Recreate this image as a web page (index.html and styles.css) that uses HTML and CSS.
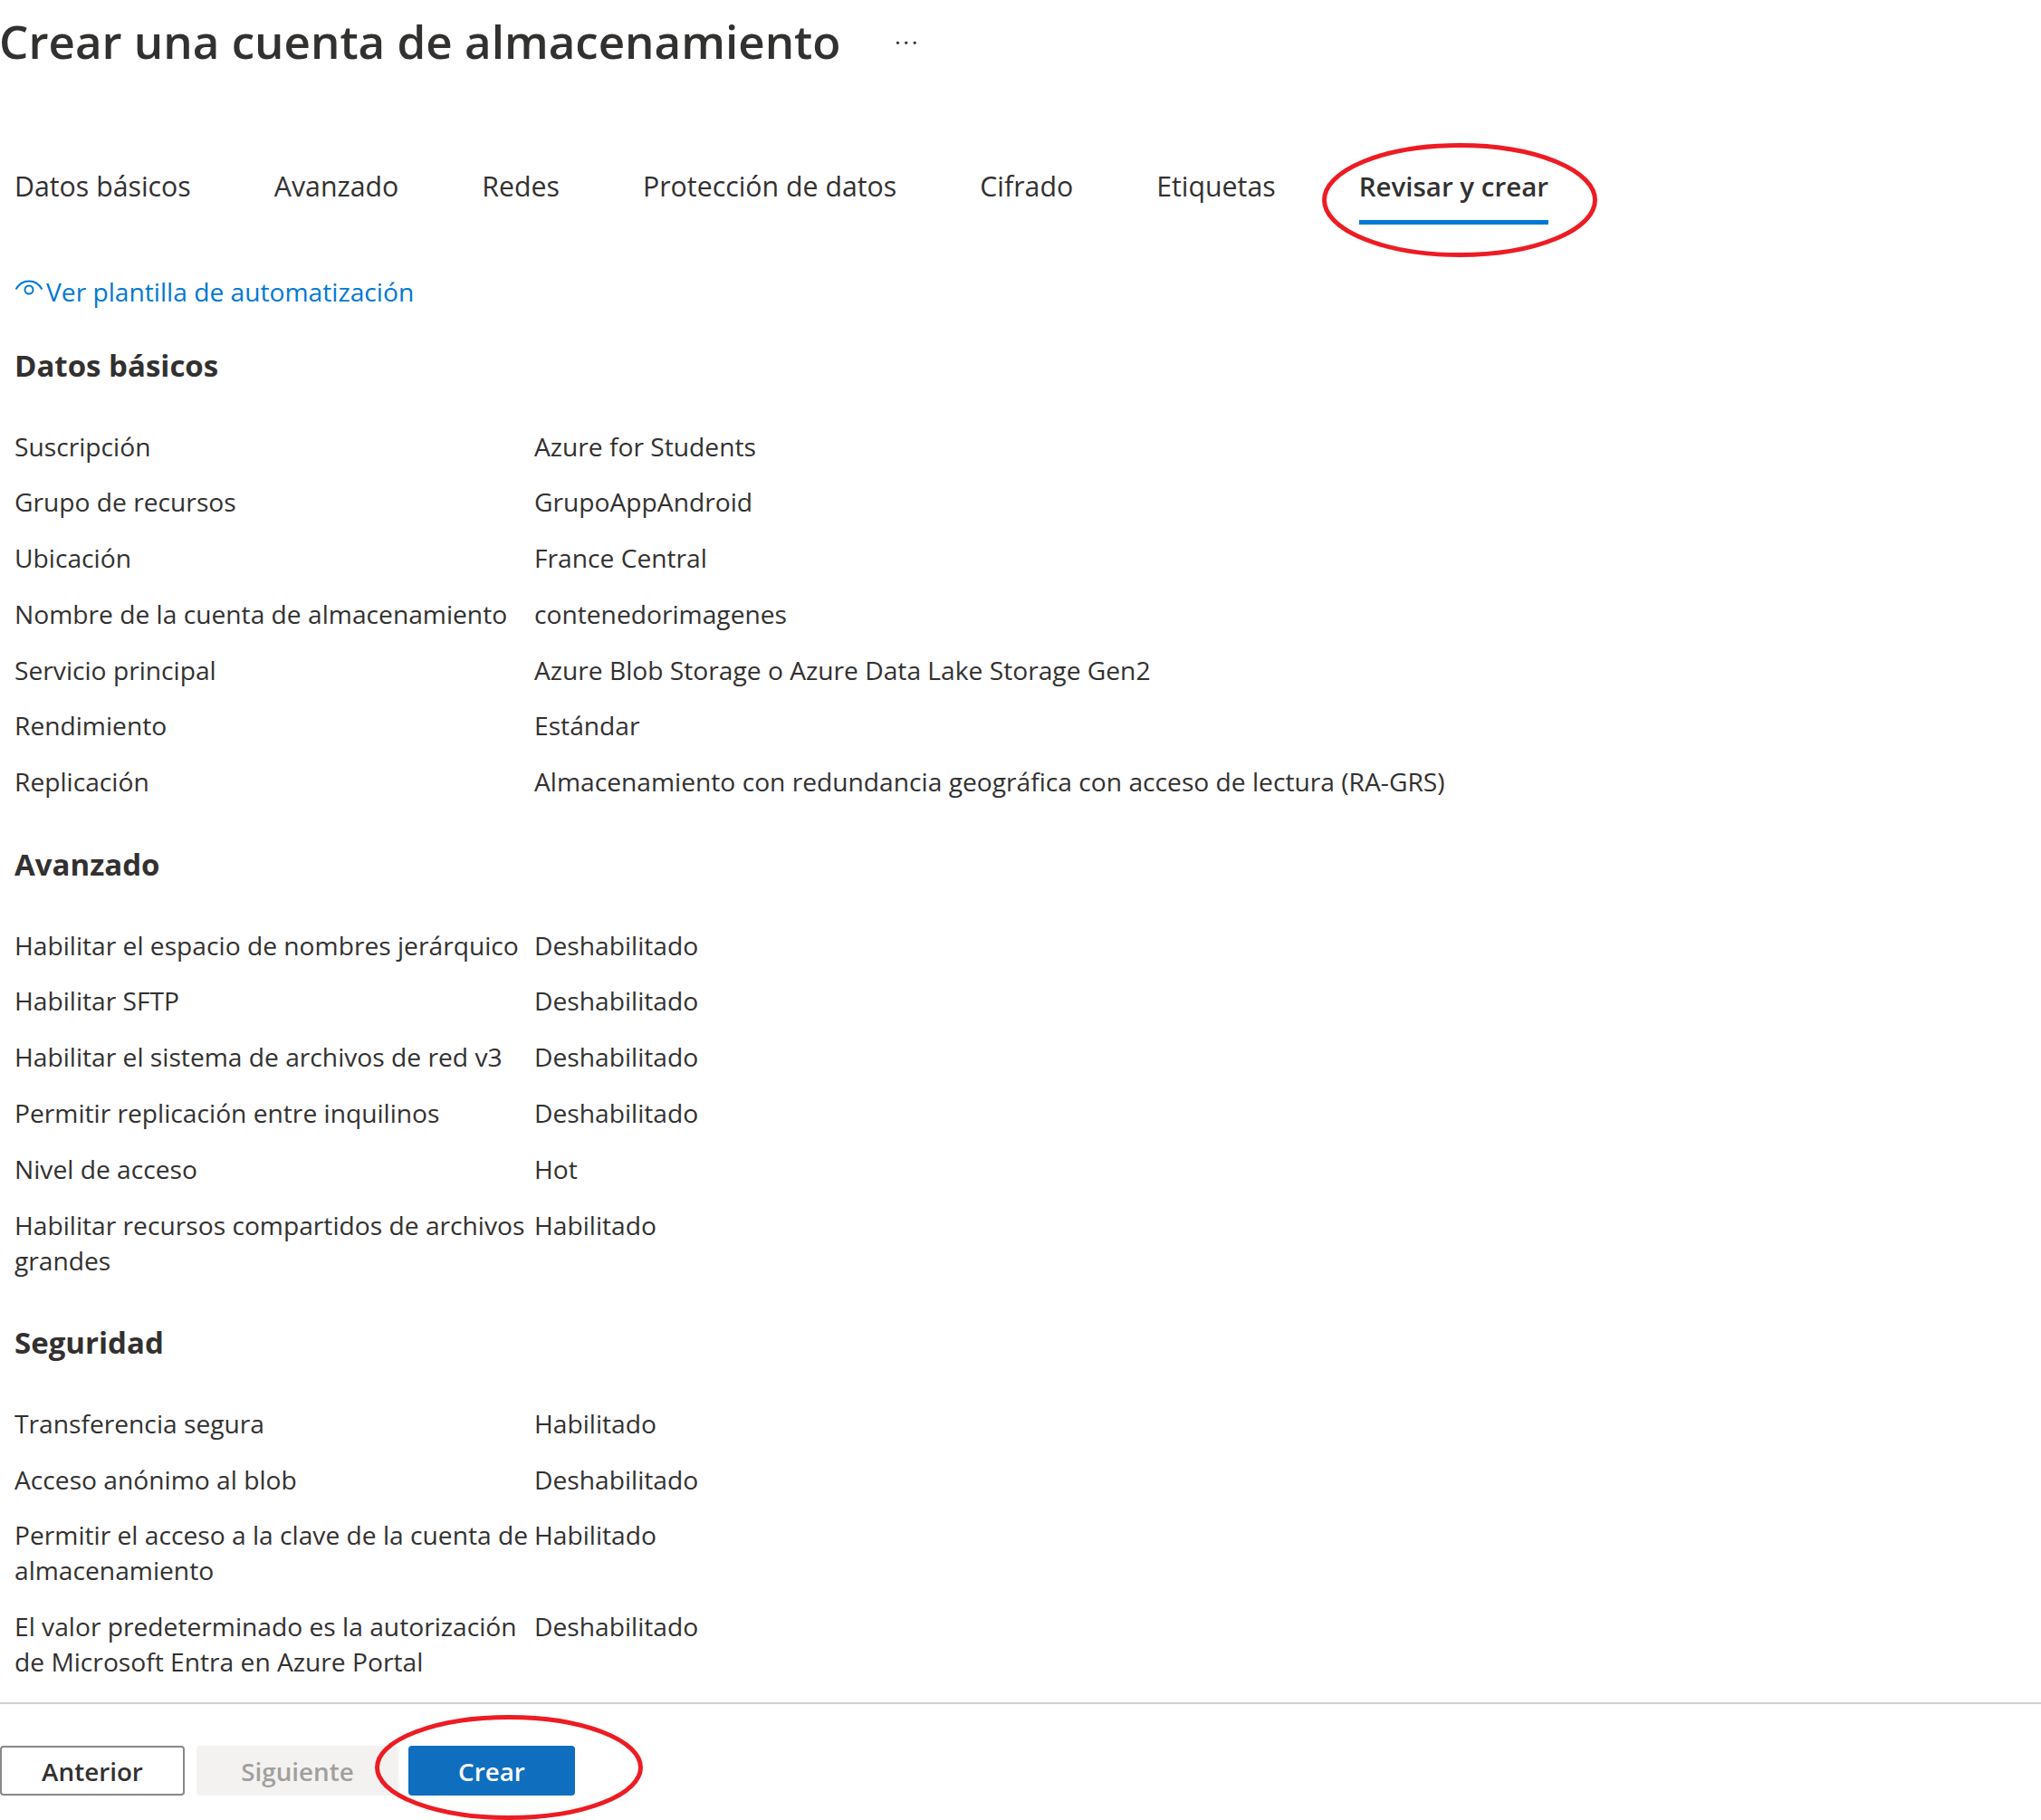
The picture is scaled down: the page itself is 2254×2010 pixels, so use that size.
FILE: index.html
```html
<!DOCTYPE html>
<html lang="es">
<head>
<meta charset="utf-8">
<title>Crear una cuenta de almacenamiento</title>
<link rel="stylesheet" href="styles.css">
</head>
<body>
<div class="page">
  <header class="title-bar">
    <h1 class="title">Crear una cuenta de almacenamiento</h1>
    <span class="more">···</span>
  </header>
  <nav class="tabs">
    <a class="tab">Datos básicos</a>
    <a class="tab">Avanzado</a>
    <a class="tab">Redes</a>
    <a class="tab">Protección de datos</a>
    <a class="tab">Cifrado</a>
    <a class="tab">Etiquetas</a>
    <a class="tab tab-active">Revisar y crear</a>
  </nav>
  <main class="content">
    <a class="link">
      <svg class="link-icon" viewBox="0 0 32 22" fill="none" stroke="#0078d4" stroke-width="2"><path d="M1.5 11.5C5 5.5 10 2.5 16 2.5s11 3 14.500 9"/><circle cx="16" cy="12" r="4.500"/></svg>
      <span>Ver plantilla de automatización</span>
    </a>
    <section class="section">
      <h2 class="heading">Datos básicos</h2>
      <dl class="rows">
        <div class="row"><dt>Suscripción</dt><dd>Azure for Students</dd></div>
        <div class="row"><dt>Grupo de recursos</dt><dd>GrupoAppAndroid</dd></div>
        <div class="row"><dt>Ubicación</dt><dd>France Central</dd></div>
        <div class="row"><dt>Nombre de la cuenta de almacenamiento</dt><dd>contenedorimagenes</dd></div>
        <div class="row"><dt>Servicio principal</dt><dd>Azure Blob Storage o Azure Data Lake Storage Gen2</dd></div>
        <div class="row"><dt>Rendimiento</dt><dd>Estándar</dd></div>
        <div class="row"><dt>Replicación</dt><dd>Almacenamiento con redundancia geográfica con acceso de lectura (RA-GRS)</dd></div>
      </dl>
    </section>
    <section class="section">
      <h2 class="heading">Avanzado</h2>
      <dl class="rows">
        <div class="row"><dt>Habilitar el espacio de nombres jerárquico</dt><dd>Deshabilitado</dd></div>
        <div class="row"><dt>Habilitar SFTP</dt><dd>Deshabilitado</dd></div>
        <div class="row"><dt>Habilitar el sistema de archivos de red v3</dt><dd>Deshabilitado</dd></div>
        <div class="row"><dt>Permitir replicación entre inquilinos</dt><dd>Deshabilitado</dd></div>
        <div class="row"><dt>Nivel de acceso</dt><dd>Hot</dd></div>
        <div class="row"><dt>Habilitar recursos compartidos de archivos<br>grandes</dt><dd>Habilitado</dd></div>
      </dl>
    </section>
    <section class="section">
      <h2 class="heading">Seguridad</h2>
      <dl class="rows">
        <div class="row"><dt>Transferencia segura</dt><dd>Habilitado</dd></div>
        <div class="row"><dt>Acceso anónimo al blob</dt><dd>Deshabilitado</dd></div>
        <div class="row"><dt>Permitir el acceso a la clave de la cuenta de<br>almacenamiento</dt><dd>Habilitado</dd></div>
        <div class="row"><dt>El valor predeterminado es la autorización<br>de Microsoft Entra en Azure Portal</dt><dd>Deshabilitado</dd></div>
      </dl>
    </section>
  </main>
  <footer class="footer">
    <button class="btn btn-outline">Anterior</button>
    <button class="btn btn-disabled">Siguiente</button>
    <button class="btn btn-primary">Crear</button>
  </footer>
  <svg class="mark mark-tab" viewBox="0 0 304 126" fill="none" stroke="#ed1c24" stroke-width="5"><ellipse cx="152" cy="63" rx="149.500" ry="60.500"/></svg>
  <svg class="mark mark-btn" viewBox="0 0 296 116" fill="none" stroke="#ed1c24" stroke-width="5"><ellipse cx="148" cy="58" rx="145.500" ry="55.500"/></svg>
</div>
</body>
</html>
```
FILE: styles.css
```css
* { box-sizing: border-box; }
html, body { margin: 0; padding: 0; background: #fff; }
.page {
  position: relative;
  width: 2254px;
  height: 2010px;
  overflow: hidden;
  font-family: "Open Sans", "Noto Sans", sans-serif;
  color: #323130;
  font-size: 28.2px;
  line-height: 39px;
}
.title-bar { display: flex; align-items: center; height: 92px; }
.title { margin: 0 0 0 -1px; font-size: 51.1px; line-height: 90px; height: 92px; font-weight: 600; width: 989px; white-space: nowrap; }
.more { font-size: 26px; letter-spacing: 2.500px; }
.tabs { display: flex; gap: 92px; margin-top: 94px; padding-left: 16px; font-size: 30.3px; }
.tab { display: block; padding-bottom: 23px; }
.tab-active { font-weight: 600; font-size: 29.5px; padding-bottom: 18px; border-bottom: 5px solid #0078d4; }
.content { padding-left: 16px; }
.link { display: flex; align-items: flex-start; margin-top: 55px; color: #0078d4; }
.link-icon { width: 32px; height: 22px; margin: 5px 3px 0 0; flex: none; }
.section { margin-top: 27px; }
.link + .section { margin-top: 40px; }
.heading { margin: 0 0 47.5px; font-size: 33px; line-height: 44px; font-weight: 700; }
.rows { margin: 0; }
.row { display: grid; grid-template-columns: 574px 1fr; padding-bottom: 22.8px; }
.row dt, .row dd { margin: 0; white-space: nowrap; }
.footer { border-top: 2px solid #d2d0ce; margin-top: 2px; padding-top: 46px; display: flex; gap: 13px; }
.btn { height: 55px; border-radius: 4px; font: inherit; font-weight: 600; font-size: 27.8px; padding: 2px 0 0; border: 0; }
.btn-outline { width: 204px; background: #fff; border: 2px solid #8a8886; color: #323130; }
.btn-disabled { width: 223px; background: #f3f2f1; color: #a19f9d; }
.btn-primary { width: 184px; margin-left: -2px; background: #106ebe; color: #fff; }
.mark { position: absolute; }
.mark-tab { left: 1460px; top: 158px; width: 304px; height: 126px; }
.mark-btn { left: 414px; top: 1894px; width: 296px; height: 116px; }
```
